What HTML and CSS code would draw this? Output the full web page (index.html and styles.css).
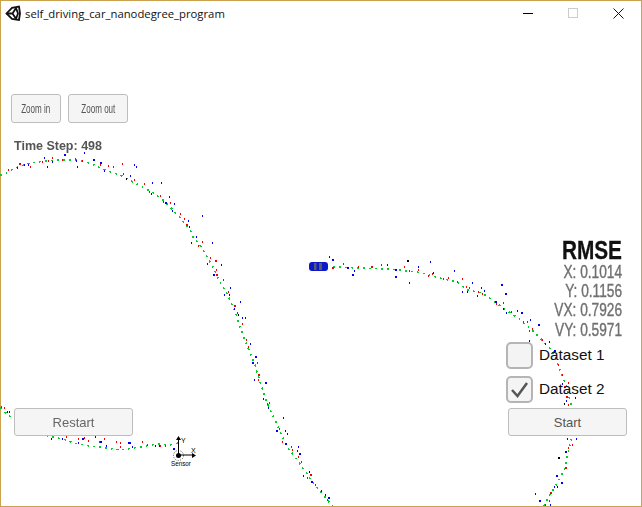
FILE: index.html
```html
<!DOCTYPE html>
<html lang="en">
<head>
<meta charset="utf-8">
<title>self_driving_car_nanodegree_program</title>
<link rel="stylesheet" href="styles.css">
</head>
<body>
<div class="window">
  <svg class="track" width="642" height="507" viewBox="0 0 642 507" aria-hidden="true">
    <g class="green">
      <path d="M0 175L5 174L15 168L30 163L45 161L60 160L75 160L90 163L105 170L120 175L135 183L152 192L163 200L173 210L180 218L190 230L193 237L200 245L209 260L213 267L218 278L222 285L225 290L230 300L236 314L240 327L243 335L248 348L250 352L255 365L258 375L262 388L265 397L270 410L275 420L278 427L283 438L288 448L295 457L302 467L309 477L315 485L322 493L332 506"/>
      <path d="M333 267L360 268L390 269L420 272.500L440 278L457 282L468 290L482 293L492 300L503 308L518 318L532 330L542 340L553 352L560 370L565 383L572 407L573 420L572 436L568 453L565 468L560 478L553 490L548 498L544 506"/>
      <path d="M0 408L12 418L48 436L67 440L73 443L90 446L100 447L120 450L140 447L157 444L170 445L178 443"/>
    </g>
    <path class="blue" d="M44 158h1M84 153h1M93 160h2M100 163h2M76 161h1M52 162h1M47 167h1M24 165h1M17 168h1M28 165h1M77 167h1M104 171h1M134 165h1M136 167h1M130 176h1M152 183h1M161 183h1M151 194h1M165 203h2M169 197h1M172 211h1M174 204h1M202 216h1M188 221h1M189 227h1M196 237h1M191 243h1M212 243h1M207 264h1M221 265h1M213 275h2M230 288h1M224 295h1M229 295h1M240 302h1M234 309h1M245 318h1M242 318h1M250 344h1M255 357h2M252 363h2M254 380h1M265 383h2M263 399h1M268 408h1M283 418h1M285 431h1M287 434h1M285 444h2M298 447h1M297 451h1M303 476h1M321 491h1M325 495h1M328 498h2M329 257h1M332 260h2M347 268h2M354 271h1M352 275h2M387 265h1M395 277h2M409 283h1M418 267h1M395 270h2M430 262h1M433 273h1M454 271h1M472 283h1M501 285h2M505 294h2M481 288h1M484 291h1M462 292h1M467 292h1M477 296h1M495 302h2M503 309h1M506 313h1M517 311h1M530 320h1M529 341h1M549 342h1M545 344h1M562 384h1M575 398h1M566 401h1M567 439h1M576 439h1M556 476h2M554 487h1M557 487h1M535 494h1M539 501h2M550 505h1M7 412h1M9 412h1M51 439h1M62 439h1M82 439h2M95 437h1M78 443h1M100 442h2M106 446h1M130 443h1M132 447h1M155 446h1M159 446h1M173 449h2"/>
    <path class="blue big" d="M64 155h2M521 313h2M538 325h2M554 351h2M565 452h2M561 483h2M276 431h2M299 454h2M311 482h2M128 443h2"/>
    <path class="red" d="M8 170h1M30 167h1M42 162h1M48 161h1M52 158h1M62 160h1M75 159h1M82 161h1M100 165h1M108 166h1M113 167h1M122 164h1M123 174h1M134 180h1M144 184h1M149 192h1M160 196h1M163 202h1M180 214h1M184 219h1M170 203h1M202 242h1M198 246h1M210 258h1M216 270h1M223 280h1M228 292h1M237 313h1M242 324h1M246 340h1M248 347h1M257 363h1M258 380h1M267 404h1M269 403h1M279 429h1M282 442h1M291 447h1M292 450h1M298 457h1M301 462h1M307 478h1M315 485h1M327 500h1M332 268h2M343 264h1M358 267h1M371 267h2M381 265h1M404 267h1M409 271h1M418 270h1M428 276h1M432 274h1M443 279h1M448 278h1M462 279h1M457 282h1M466 287h1M469 288h1M478 292h1M482 294h1M503 303h1M496 304h1M511 312h1M523 322h1M527 322h1M532 329h1M529 331h1M542 340h1M558 365h1M562 375h1M568 383h1M564 387h1M568 405h1M572 445h1M568 448h1M549 501h1M545 505h1M1 407h1M4 408h1M66 437h1M78 439h1M84 438h1M88 441h1M104 439h1M99 442h1M116 442h1M120 443h1M120 447h1M142 442h1M147 445h1M160 446h1M165 446h1"/>
    <path class="red big" d="M19 164h2M186 225h2M215 261h2M216 275h2M234 306h2M258 375h2M310 475h2M566 397h2M565 468h2M550 493h2"/>
    <path class="black" d="M126 179h1M238 315h1M407 261h2M309 472h1M558 458h2M564 404h1"/>
    <g class="car">
      <rect class="car-body" x="309" y="262" width="19" height="9" rx="3"/>
      <rect class="car-glass" x="314" y="263" width="2.500" height="7"/>
      <rect class="car-glass" x="319" y="263" width="3" height="7"/>
    </g>
    <g class="axes">
      <path d="M178.500 455V439M178.500 455H194"/>
      <path class="arrow" d="M178.500 436l-2.500 4h5zM196 455.500l-4-2.500v5z"/>
      <circle class="origin" cx="178.500" cy="455.500" r="2.500"/>
      <circle class="origin-ring" cx="178.500" cy="455.500" r="5"/>
      <text class="axis-label" x="181" y="443">Y</text>
      <text class="axis-label" x="191" y="453">X</text>
      <text class="axis-label sensor" x="171" y="465.500">Sensor</text>
    </g>
  </svg>

  <header class="titlebar">
    <svg class="logo" width="16" height="16" viewBox="0 0 16 16" aria-hidden="true">
      <path d="M1.500 8.500L7 2.800L14 1.500L15 8.500L14 15L7 13.800Z"/>
      <path d="M1.500 8.500H7.500M7.500 8.500L11 3M7.500 8.500L11 13.800M11 3L13 8.500L11 13.800"/>
    </svg>
    <span class="title">self_driving_car_nanodegree_program</span>
    <div class="controls">
      <span class="ctl ctl-min"></span>
      <span class="ctl ctl-max"></span>
      <svg class="ctl" width="11" height="11" viewBox="0 0 11 11" aria-hidden="true"><path class="ctl-close" d="M.5 .5L10.500 10.500M10.500 .5L.5 10.500"/></svg>
    </div>
  </header>

  <main class="hud">
    <div class="hud-top">
      <div class="zoom-row">
        <button class="btn btn-zoom-in"><span class="narrow">Zoom in</span></button>
        <button class="btn btn-zoom-out"><span class="narrow">Zoom out</span></button>
      </div>
      <div class="timestep">Time Step: 498</div>
    </div>
    <div class="hud-bottom">
      <button class="btn btn-wide btn-restart">Restart</button>
      <aside class="panel">
        <div class="rmse">
          <div class="rmse-title">RMSE</div>
          <div class="rmse-row">X: 0.1014</div>
          <div class="rmse-row">Y: 0.1156</div>
          <div class="rmse-row">VX: 0.7926</div>
          <div class="rmse-row">VY: 0.5971</div>
        </div>
        <div class="check-row">
          <span class="check"></span>
          <span class="check-label">Dataset 1</span>
        </div>
        <div class="check-row">
          <span class="check">
            <svg width="23" height="23" viewBox="0 0 23 23" aria-hidden="true"><path d="M4 12L9.500 18L19 5"/></svg>
          </span>
          <span class="check-label">Dataset 2</span>
        </div>
        <button class="btn btn-wide btn-start">Start</button>
      </aside>
    </div>
  </main>
</div>
</body>
</html>
```
FILE: styles.css
```css
* { box-sizing: border-box; }
html, body { margin: 0; padding: 0; background: #fff; }
body { width: 642px; height: 507px; overflow: hidden; font-family: "Liberation Sans", Arial, sans-serif; }

.window {
  position: relative;
  width: 642px;
  height: 507px;
  border: 1px solid #c9a24f;
  display: flex;
  flex-direction: column;
  background: #fff;
}

/* free canvas: simulator world */
.track { position: absolute; left: -1px; top: -1px; }
.green path { fill: none; stroke: #00d02a; stroke-width: 1.600; stroke-dasharray: 2 4; shape-rendering: crispEdges; }
.blue { fill: none; stroke: #0000f0; stroke-width: 1.200; shape-rendering: crispEdges; }
.red { fill: none; stroke: #f80000; stroke-width: 1.200; shape-rendering: crispEdges; }
.black { fill: none; stroke: #000; stroke-width: 1.200; shape-rendering: crispEdges; }
.big { stroke-width: 2.500; }
.car-body { fill: #0c18c8; }
.car-glass { fill: #5a5a6a; }
.axes path { fill: none; stroke: #000; stroke-width: 1; }
.axes .arrow { fill: #000; stroke: none; }
.origin { fill: #000; }
.origin-ring { fill: none; stroke: #000; stroke-width: .7; stroke-dasharray: 1 1.500; }
.axis-label { font: 7px "Liberation Sans", sans-serif; fill: #000; }
.sensor { font-size: 6.300px; }

.titlebar {
  position: relative;
  height: 30px;
  flex: none;
  display: flex;
  align-items: center;
  padding: 0 17px 6px 4px;
}
.logo { flex: none; }
.logo path { fill: none; stroke: #111; stroke-width: 1.800; }
.title { margin-left: 4px; font: 11.300px "Open Sans", sans-serif; color: #111; }
.controls { margin-left: auto; display: flex; align-items: center; gap: 35px; }
.ctl { display: block; width: 11px; height: 11px; }
.ctl-min { border-top: 1px solid #000; height: 0; width: 10px; }
.ctl-max { border: 1px solid #ccc; width: 10px; height: 10px; }
.ctl-close { fill: none; stroke: #111; stroke-width: 1; }

.hud {
  position: relative;
  flex: 1;
  display: flex;
  flex-direction: column;
  justify-content: space-between;
  padding: 63px 14px 70px 10px;
}
.zoom-row { display: flex; gap: 7px; }
.btn {
  display: block;
  margin: 0;
  padding: 0;
  background: #f5f5f5;
  border: 1px solid #bdbdbd;
  border-radius: 3px;
  font-family: "Liberation Sans", sans-serif;
}
.btn-zoom-in { width: 50px; height: 29px; }
.btn-zoom-out { width: 60px; height: 29px; }
.narrow { display: inline-block; font-size: 12px; color: #555; transform: scaleX(.67); filter: blur(.3px); white-space: nowrap; }
.timestep { margin: 16px 0 0 3px; font-size: 12.500px; font-weight: bold; color: #555; filter: blur(.3px); }

.hud-bottom { display: flex; justify-content: space-between; align-items: flex-end; }
.btn-wide { width: 119px; height: 28px; font-size: 13px; color: #555; }
.btn-restart { margin-left: 3px; color: #666; filter: blur(.3px); font-size: 13px; }

.panel { width: 121px; display: flex; flex-direction: column; }
.rmse { text-align: right; padding-right: 5px; }
.rmse-title { font-size: 26px; line-height: 26px; font-weight: bold; color: #111; transform: scaleX(.8); transform-origin: right center; filter: blur(.4px); -webkit-text-stroke: .3px #111; }
.rmse-row { font-size: 18px; line-height: 19.300px; color: #707070; transform: scaleX(.76); transform-origin: right center; filter: blur(.5px); white-space: nowrap; -webkit-text-stroke: .4px #707070; }
.check-row { display: flex; align-items: center; gap: 6px; margin-top: 7px; height: 27px; }
.rmse + .check-row { margin-top: 2px; }
.check {
  flex: none;
  width: 27px;
  height: 27px;
  border: 2px solid #b5b5b5;
  border-radius: 5px;
  background: #f4f4f4;
  display: flex;
}
.check svg path { fill: none; stroke: #555; stroke-width: 2.500; }
.check-label { font-size: 15.300px; color: #111; margin-top: -2px; }
.btn-start { margin-top: 5px; width: 119px; margin-left: 2px; }
```
